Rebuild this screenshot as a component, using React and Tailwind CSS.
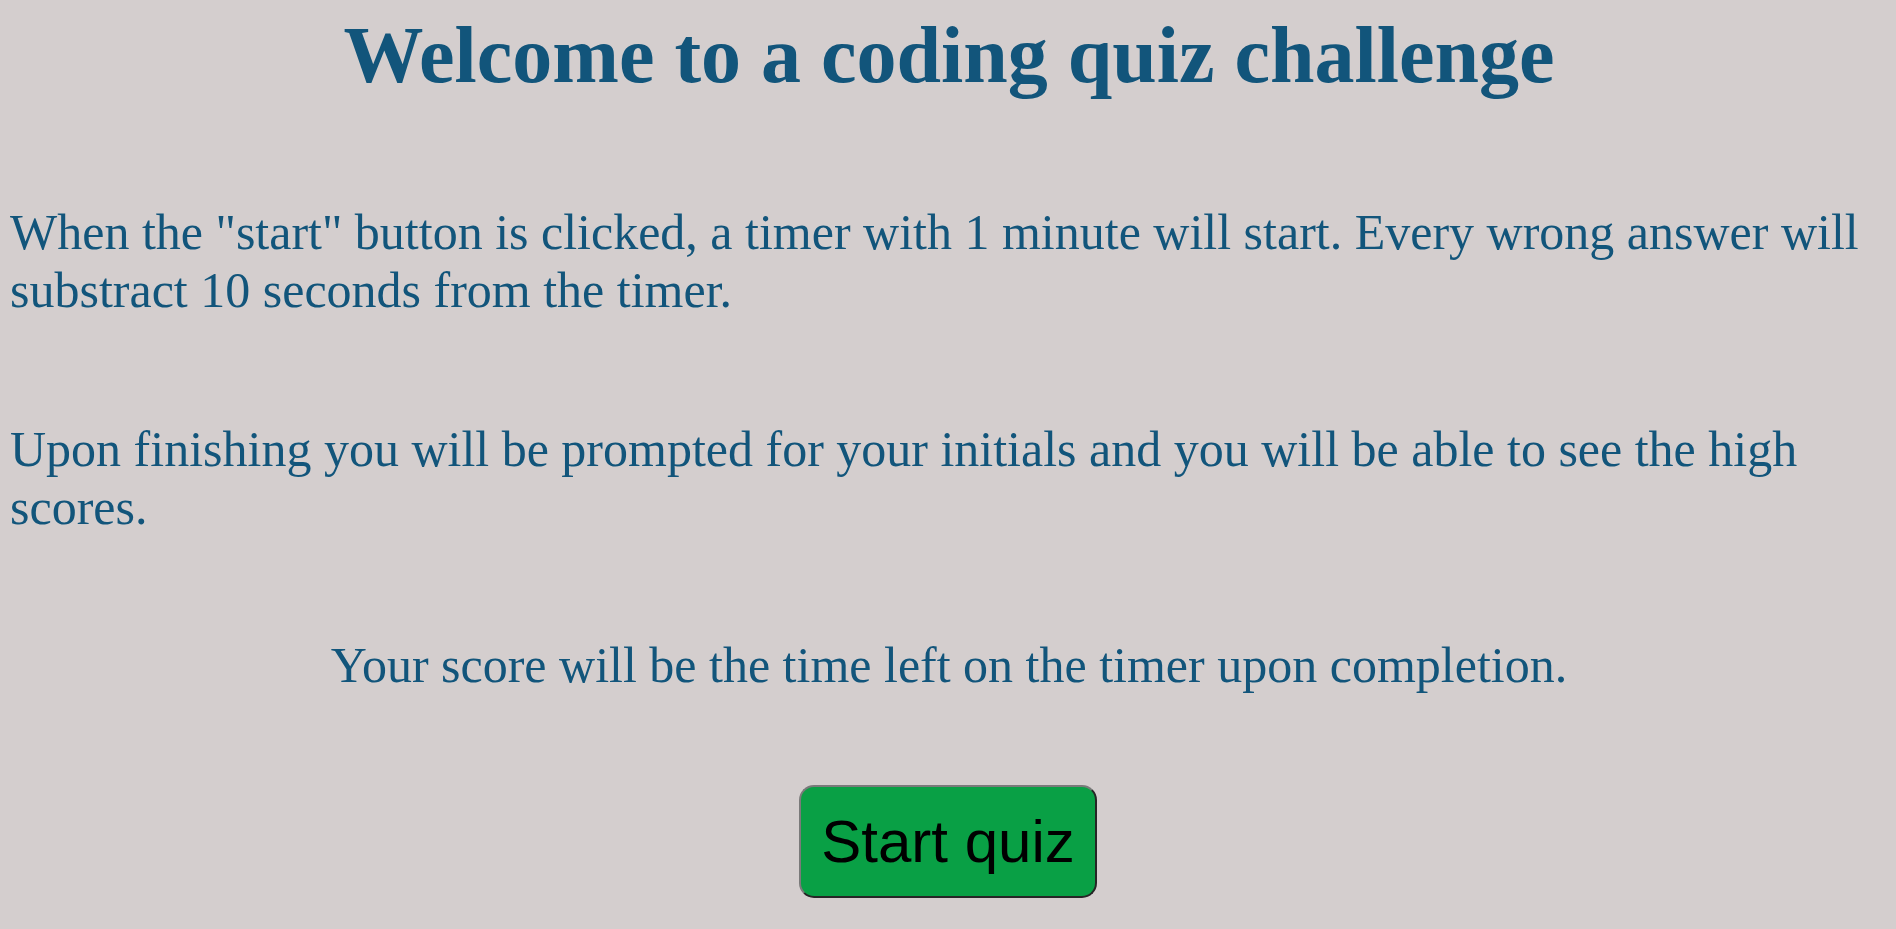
import React from 'react';

const App = () => {
  return (
    <div className="min-h-[929px] w-full bg-[#d4cece] pl-[10px] pr-[8px] pt-[9px] font-['Liberation_Serif','Times_New_Roman',serif] text-[#12557b]">
      <h1 className="text-center text-[80px] leading-[92px] font-bold">
        Welcome to a coding quiz challenge
      </h1>

      <p className="mt-[103px] text-[50px] leading-[57.5px]">
        When the "start" button is clicked, a timer with 1 minute will start. Every wrong answer will substract 10 seconds from the timer.
      </p>

      <p className="mt-[102px] text-[50px] leading-[57.5px]">
        Upon finishing you will be prompted for your initials and you will be able to see the high scores.
      </p>

      <p className="mt-[101px] text-center text-[50px] leading-[57.5px]">
        Your score will be the time left on the timer upon completion.
      </p>

      {/* start button */}
      <div className="mt-[90px] flex justify-center pr-[2px]">
        <button className="rounded-[15px] border-2 border-t-[#7a7a7a] border-l-[#7a7a7a] border-b-[#262626] border-r-[#262626] bg-[#09a045] p-[20px] font-['Liberation_Sans',Arial,sans-serif] text-[60px] leading-[69px] text-black">
          Start quiz
        </button>
      </div>
    </div>
  );
};

export default App;
